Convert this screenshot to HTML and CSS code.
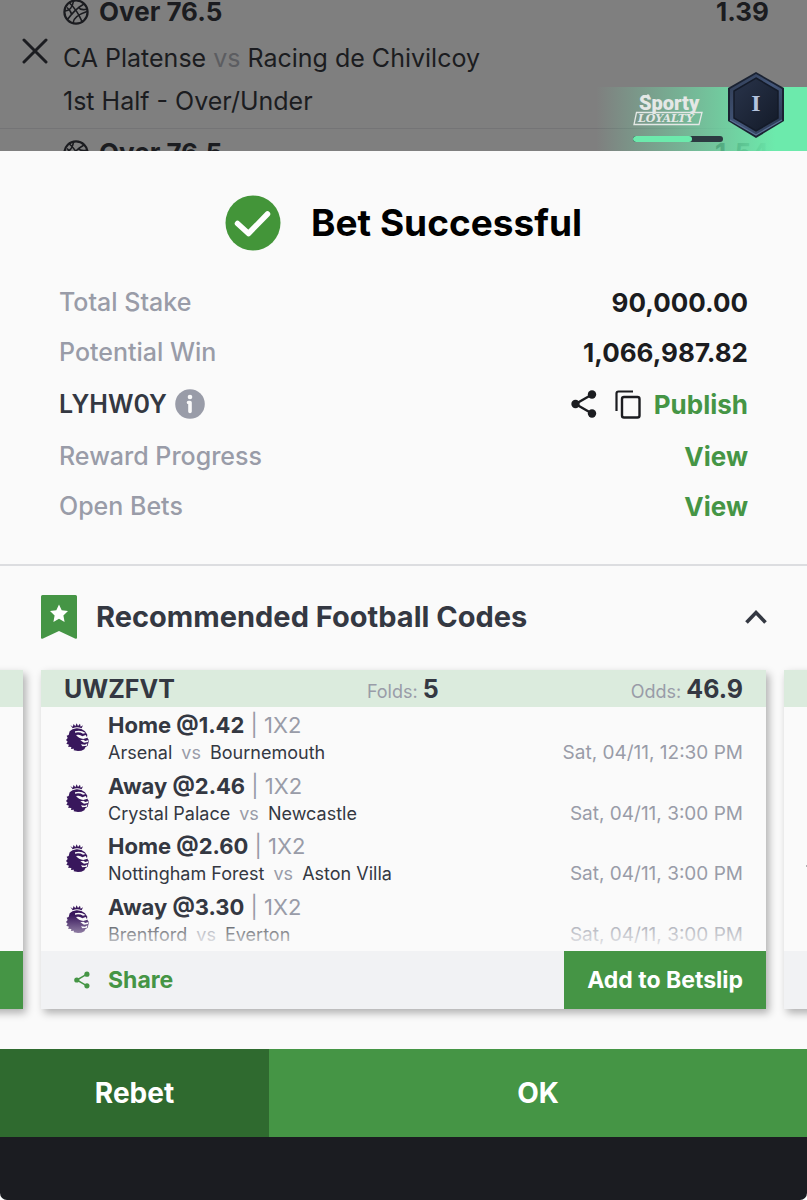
FILE: index.html
```html
<!DOCTYPE html>
<html lang="en">
<head>
<meta charset="utf-8">
<meta name="viewport" content="width=device-width, initial-scale=1">
<title>Bet Successful</title>
<link rel="stylesheet" href="styles.css">
</head>
<body>
<svg class="defs" aria-hidden="true">
  <symbol id="ball" viewBox="0 0 26 26">
    <g fill="none" stroke="currentColor" stroke-width="2.2">
      <circle cx="13" cy="13" r="11.6"/>
      <path d="M4.500 20.500Q12 10 21 5M6.500 4Q14 11 19 22.500M2 12Q9 11.500 10.500 2M10 24Q10.500 17 24 12.500M15 8Q18 12 24 10M4 8.500Q8 12 9 16" stroke-width="1.600"/>
    </g>
  </symbol>
  <symbol id="share" viewBox="0 0 26 28">
    <path d="M21 4.500 4.500 14 21 23.500" fill="none" stroke="currentColor" stroke-width="2.400"/>
    <circle cx="21" cy="4.500" r="4.200" fill="currentColor"/><circle cx="4.500" cy="14" r="4.200" fill="currentColor"/><circle cx="21" cy="23.500" r="4.200" fill="currentColor"/>
  </symbol>
  <symbol id="lion" viewBox="0 0 69 84">
    <path fill="#38175c" d="M13 6l7 5 3-8 5 7 4-9 4 8 6-7 2 9 7-4-4 9Q33 9 20 16ZM11 25Q18 17 31 16Q46 15 57 25L64 35 63 43 69 52 67 60 65 68 58 73 55 79 46 83 36 84 23 82 24 77 15 78 16 72 6 71 9 65 1 62 5 56 0 51 5 45 2 38 8 36Z"/>
    <path fill="#fafafa" d="M27 25Q43 19 59 30L51 32Q41 26 27 29ZM30 36Q42 33 49 40L59 36 64 44 52 48Q38 47 30 36ZM43 52L52 50 58 54 68 51 66 57 54 59ZM45 64L57 65 64 61 63 68 49 70Z"/>
  </symbol>
</svg>
<div class="page">
  <section class="slip" aria-label="Betslip">
    <article class="pick">
      <button class="remove" aria-label="Remove"><svg viewBox="0 0 26 26"><path d="M2 2l22 22M24 2 2 24" fill="none" stroke="currentColor" stroke-width="3" stroke-linecap="round"/></svg></button>
      <div class="pick-main">
        <div class="pick-head"><svg class="ball"><use href="#ball"/></svg><b>Over 76.5</b><b class="price">1.39</b></div>
        <div class="pick-line">CA Platense <span class="dim">vs</span> Racing de Chivilcoy</div>
        <div class="pick-line">1st Half - Over/Under</div>
      </div>
    </article>
    <article class="pick">
      <div class="pick-main">
        <div class="pick-head"><svg class="ball"><use href="#ball"/></svg><b>Over 76.5</b><b class="price">1.54</b></div>
      </div>
    </article>
    <aside class="loyalty">
      <div class="brand">
        <svg class="wordmark" viewBox="0 0 70 32" role="img" aria-label="Sporty Loyalty">
          <circle cx="11" cy="2.500" r="1.500" fill="#e4e8e6"/><circle cx="15" cy="1.700" r="1.500" fill="#e4e8e6"/>
          <text class="wm-top" x="6" y="16">Sporty</text>
          <path d="M3.500 18.500H69L66 30.500H1Z" fill="none" stroke="#e4e8e6" stroke-width="1.300"/>
          <text class="wm-sub" x="5" y="28">LOYALTY</text>
        </svg>
        <div class="meter"><span class="meter-fill"></span></div>
      </div>
      <svg class="tier" viewBox="0 0 58 66" role="img" aria-label="Tier I">
        <defs><linearGradient id="rim" x1="0" y1="0" x2="1" y2="1"><stop offset="0" stop-color="#2f3b52"/><stop offset=".5" stop-color="#44577a"/><stop offset="1" stop-color="#26324a"/></linearGradient>
        <linearGradient id="core" x1="0" y1="0" x2="1" y2="1"><stop offset="0" stop-color="#29344b"/><stop offset="1" stop-color="#131a28"/></linearGradient></defs>
        <path d="M29 0 57 16V49L29 66 1 49V16Z" fill="#1a2232"/>
        <path d="M29 2 55 17V48L29 63 3 48V17Z" fill="url(#rim)"/>
        <path d="M29 6 51 19V46L29 59 7 46V19Z" fill="url(#core)" stroke="#141b29" stroke-width="1.500"/>
        <path d="M3 48 29 63 55 48" fill="none" stroke="#5a6f94" stroke-width="1.200"/>
        <text class="tier-num" x="29" y="39" text-anchor="middle">I</text>
      </svg>
    </aside>
  </section>

  <main class="sheet">
    <header class="result">
      <svg class="check" viewBox="0 0 56 56" aria-hidden="true"><circle cx="28" cy="28" r="27.500" fill="#439539"/><path d="M12.500 28.500 23.500 38.500 42.500 19" fill="none" stroke="#fff" stroke-width="5.500" stroke-linecap="round" stroke-linejoin="round"/></svg>
      <h1>Bet Successful</h1>
    </header>
    <dl class="summary">
      <div class="row"><dt>Total Stake</dt><dd>90,000.00</dd></div>
      <div class="row"><dt>Potential Win</dt><dd>1,066,987.82</dd></div>
      <div class="row row-code">
        <dt class="code">LYHW0Y
          <button class="icon-btn" aria-label="About this code"><svg class="info" viewBox="0 0 30 30"><circle cx="15" cy="15" r="14.800" fill="#999ca8"/><circle cx="15" cy="8" r="2.300" fill="#fafafa"/><path d="M13.500 13.500H15V22.500" fill="none" stroke="#fafafa" stroke-width="3.600" stroke-linecap="round" stroke-linejoin="round"/></svg></button>
        </dt>
        <dd class="tools">
          <button class="icon-btn" aria-label="Share"><svg class="share"><use href="#share"/></svg></button>
          <button class="icon-btn" aria-label="Copy"><svg class="copy" viewBox="0 0 26 29"><path d="M1.500 21V3.500Q1.500 1.500 3.500 1.500H18" fill="none" stroke="currentColor" stroke-width="2.200"/><rect x="7" y="7" width="17.500" height="20.500" rx="2" fill="none" stroke="currentColor" stroke-width="2.400"/></svg></button>
          <a href="#publish">Publish</a>
        </dd>
      </div>
      <div class="row"><dt>Reward Progress</dt><dd><a href="#reward">View</a></dd></div>
      <div class="row"><dt>Open Bets</dt><dd><a href="#bets">View</a></dd></div>
    </dl>

    <section class="codes">
      <div class="codes-head">
        <svg class="flag" viewBox="0 0 36 44" aria-hidden="true"><path d="M1.500 0H34.500Q36 0 36 1.500V42.500Q36 44.500 34 43.500L18 36 2 43.500Q0 44.500 0 42.500V1.500Q0 0 1.500 0Z" fill="#459545"/><path d="M18 9.500 20.700 15.200 27 16 22.400 20.400 23.600 27 18 23.800 12.400 27 13.600 20.400 9 16 15.300 15.200Z" fill="#fff"/></svg>
        <h2>Recommended Football Codes</h2>
        <button class="icon-btn" aria-label="Collapse"><svg class="chevron" viewBox="0 0 24 16"><path d="M2.500 13.500 12 3.500 21.500 13.500" fill="none" stroke="currentColor" stroke-width="3.600"/></svg></button>
      </div>
      <div class="carousel">
        <article class="card" aria-hidden="true"><div class="card-head"></div><div class="card-body"></div><div class="card-foot"><div class="add-edge"></div></div></article>
        <article class="card">
          <div class="card-head"><b>UWZFVT</b><span>Folds: <b>5</b></span><span>Odds: <b>46.9</b></span></div>
          <ul class="card-body">
            <li><svg class="lion"><use href="#lion"/></svg><div><p class="sel"><b>Home @1.42</b> | 1X2</p><p class="match"><span>Arsenal <i>vs</i> Bournemouth</span><time>Sat, 04/11, 12:30 PM</time></p></div></li>
            <li><svg class="lion"><use href="#lion"/></svg><div><p class="sel"><b>Away @2.46</b> | 1X2</p><p class="match"><span>Crystal Palace <i>vs</i> Newcastle</span><time>Sat, 04/11, 3:00 PM</time></p></div></li>
            <li><svg class="lion"><use href="#lion"/></svg><div><p class="sel"><b>Home @2.60</b> | 1X2</p><p class="match"><span>Nottingham Forest <i>vs</i> Aston Villa</span><time>Sat, 04/11, 3:00 PM</time></p></div></li>
            <li><svg class="lion"><use href="#lion"/></svg><div><p class="sel"><b>Away @3.30</b> | 1X2</p><p class="match"><span>Brentford <i>vs</i> Everton</span><time>Sat, 04/11, 3:00 PM</time></p></div></li>
          </ul>
          <div class="card-foot"><button class="share-btn"><svg class="share-sm"><use href="#share"/></svg>Share</button><button class="add">Add to Betslip</button></div>
        </article>
        <article class="card" aria-hidden="true"><div class="card-head"></div><div class="card-body peek"><svg viewBox="0 0 30 30"><path d="M0 15 15 2 28 15 15 28Z" fill="#343842"/></svg></div><div class="card-foot"></div></article>
      </div>
    </section>
  </main>

  <footer class="actions"><button class="rebet">Rebet</button><button class="ok">OK</button></footer>
  <div class="home-bar"></div>
</div>
</body>
</html>
```
FILE: styles.css
```css
* { box-sizing: border-box; }
body { margin: 0; background: #fff; font-family: Inter, "Liberation Sans", sans-serif; color: #343842; }
h1, h2, p, dl, dd, ul { margin: 0; padding: 0; }
ul { list-style: none; }
button { border: 0; padding: 0; background: none; font: inherit; color: inherit; cursor: pointer; }
a { color: #459545; text-decoration: none; }
svg { display: block; flex: none; }
.defs { position: absolute; width: 0; height: 0; }
.page { display: flex; flex-direction: column; min-height: 100vh; border-radius: 0 0 7px 7px; overflow: hidden; }

.slip { position: relative; height: 151px; overflow: hidden; background: #7f7f7f; color: #1b1c20; font-size: 25px; }
.pick { display: flex; padding: 0 38px 0 22px; border-bottom: 1px solid #747476; }
.pick + .pick { padding: 12px 38px 0 63px; border: 0; }
.remove { align-self: flex-start; width: 26px; margin: 38px 15px 0 0; }
.pick-main { flex: 1; }
.pick-head { display: flex; align-items: center; height: 24px; line-height: 24px; margin-bottom: 13px; }
.pick-head b { font-size: 26px; font-weight: 700; }
.ball { width: 26px; height: 26px; margin-right: 10px; }
.price { margin-left: auto; }
.pick-line { height: 43px; line-height: 43px; }
.pick-line:last-child { margin-bottom: 5px; }
.dim { color: #5c5d61; }

.loyalty { position: absolute; right: 0; bottom: 0; width: 211px; height: 64px; display: flex; justify-content: flex-end; align-items: flex-end; padding: 0 22px 9px 0; background: linear-gradient(90deg, #6ceaac00, #6ceaac 85%); }
.brand { width: 90px; margin-right: 4px; }
.wordmark { width: 70px; height: 32px; }
.wm-top { font: 900 20px Roboto, sans-serif; fill: #e4e8e6; }
.wm-sub { font: italic 700 11px "DejaVu Serif", serif; fill: #e4e8e6; }
.meter { height: 6px; margin-top: 10px; border-radius: 3px; background: #2c3a41; overflow: hidden; }
.meter-fill { display: block; width: 66%; height: 6px; border-radius: 3px; background: #6ceaac; }
.tier { width: 58px; height: 66px; margin-bottom: 4px; }
.tier-num { font: 700 24px "Liberation Serif", serif; fill: #b4c3de; }

.sheet { flex: 1; background: #fafafa; }
.result { display: flex; justify-content: center; align-items: center; gap: 30px; padding: 44px 0 26px; }
.check { width: 56px; height: 56px; }
.result h1 { font-size: 37px; line-height: 56px; font-weight: 700; color: #000; }
.summary { padding: 0 59px 33px; border-bottom: 2px solid #dcdde0; font-size: 25px; }
.row { display: flex; justify-content: space-between; align-items: center; height: 50px; }
.row-code { height: 54px; }
.row dt { font-weight: 500; color: #999ca8; }
.row dd { font-size: 26px; font-weight: 700; color: #1b1c20; }
.row .code { display: flex; align-items: center; gap: 8px; font-weight: 600; color: #343842; }
.info { width: 30px; height: 30px; }
.tools { display: flex; align-items: center; }
.share { width: 26px; height: 28px; margin-right: 18px; }
.copy { width: 26px; height: 29px; margin-right: 13px; }

.codes-head { display: flex; align-items: center; padding: 29px 39px 11px 41px; }
.flag { width: 36px; height: 44px; margin-right: 19px; }
.codes-head h2 { flex: 1; font-size: 29px; line-height: 44px; font-weight: 700; }
.chevron { width: 24px; height: 16px; }
.carousel { display: flex; justify-content: center; gap: 18px; padding: 20px 0 40px; overflow: hidden; }
.card { flex: none; width: calc(100% - 82px); background: #fafafa; box-shadow: 3px 4px 8px #0000004d; display: flex; flex-direction: column; }
.card-head { display: flex; justify-content: space-between; align-items: center; height: 37px; padding: 0 23px; background: #dbebdd; font-size: 18px; color: #999ca8; }
.card-head b { font-size: 25px; font-weight: 700; color: #343842; }
.card-body { position: relative; display: grid; grid-template-rows: repeat(4, 1fr); height: 244px; padding-bottom: 2px; }
.card-body::after { content: ""; position: absolute; inset: auto 0 0; height: 36px; background: linear-gradient(#fafafa00, #fafafae6); }
.card-body li { display: flex; padding: 3px 23px 0 25px; }
.card-body li > div { flex: 1; }
.lion { width: 23px; height: 28px; margin: 13px 19px 0 0; }
.sel { font-size: 22px; line-height: 30px; color: #999ca8; }
.sel b { font-weight: 700; color: #343842; }
.match { display: flex; justify-content: space-between; font-size: 18px; line-height: 25px; }
.match i { font-style: normal; margin: 0 4px; color: #999ca8; }
.match time { font-size: 19px; color: #999ca8; }
.peek { display: block; padding: 144px 0 0 22px; }
.peek svg { width: 30px; height: 30px; }
.card-foot { display: flex; justify-content: space-between; height: 58px; background: #f1f2f4; font-size: 23px; font-weight: 700; }
.share-btn { display: flex; align-items: center; gap: 18px; padding: 0 33px; color: #459545; }
.share-sm { width: 16px; height: 18px; }
.add { padding: 0 23px; background: #459545; color: #fff; }
.add-edge { width: 200px; margin-left: auto; background: #459545; }

.actions { display: grid; grid-template-columns: 1fr 2fr; height: 88px; font-size: 28px; font-weight: 700; color: #fff; }
.rebet { background: #2f6a2f; }
.ok { background: #459545; }
.home-bar { height: 63px; background: #1b1c21; }
```
